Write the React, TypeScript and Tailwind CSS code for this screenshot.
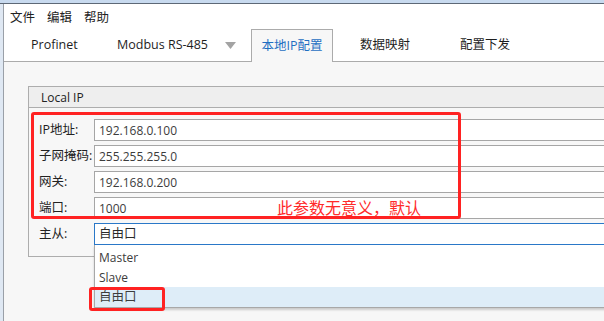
import React from "react";

const rows = [
  { label: "IP地址:", value: "192.168.0.100" },
  { label: "子网掩码:", value: "255.255.255.0" },
  { label: "网关:", value: "192.168.0.200" },
  { label: "端口:", value: "1000" },
];

export default function App() {
  return (
    <div className="w-[604px] h-[321px] overflow-hidden bg-white flex flex-col font-['Open_Sans','Noto_Sans_CJK_SC',sans-serif] text-[12px] text-[#1e1e1e]">
      <div className="h-[4px] shrink-0 bg-[#c8daef] border-b border-[#5d6876]" />
      <div className="flex-1 flex min-h-0">
        <div className="w-[3px] shrink-0 bg-[#dfe8f3]" />
        <div className="flex-1 flex flex-col border-l border-[#9aa0a8] min-w-0">
          {/* menu */}
          <div className="h-[25px] shrink-0 flex items-center pt-[3px] pl-[6px] gap-[12px] text-[12.5px] text-[#222]">
            <span>文件</span>
            <span>编辑</span>
            <span>帮助</span>
          </div>
          {/* tabs */}
          <div className="h-[33px] shrink-0 flex items-end border-b border-[#ababab] text-[12.5px] text-[#1e1e1e]">
            <div className="w-[113px] h-[32px] pl-[27px] pt-[1px] flex items-center">Profinet</div>
            <div className="w-[134px] h-[32px] pt-[1px] flex items-center justify-between pr-[15px]">
              <span>Modbus RS-485</span>
              <svg width="11" height="7" viewBox="0 0 11 7">
                <polygon points="0,0 11,0 5.5,7" fill="#a3a3a3" />
              </svg>
            </div>
            <div className="w-[82px] h-[33px] -mb-[1px] pt-[1px] relative z-10 border border-b-0 border-[#ababab] bg-[#f7f7f7] flex items-center justify-center text-[#1f6fc2]">
              本地IP配置
            </div>
            <div className="w-[127px] h-[32px] pt-[1px] pl-[27px] flex items-center">数据映射</div>
            <div className="h-[32px] pt-[1px] flex items-center">配置下发</div>
          </div>
          {/* content */}
          <div className="flex-1 relative bg-[#f7f7f7] pt-[24px] pl-[24px]">
            <div className="w-[620px] border border-[#adadad]">
              <div className="h-[21px] bg-[#eeeeee] border-b border-[#adadad] pl-[12px] pt-[1px] flex items-center text-[12px] text-[#222]">
                Local IP
              </div>
              <div className="pt-[11px] pb-[11px] pl-[10px] flex flex-col gap-[4px]">
                {rows.map((r) => (
                  <div key={r.label} className="flex items-center h-[22px]">
                    <div className="w-[55px] shrink-0 pt-[1px] text-[12.5px] text-[#222] whitespace-nowrap">{r.label}</div>
                    <div className="flex-1 h-[22px] border border-[#a6a6a6] bg-white pl-[4px] pt-[1px] flex items-center text-[12px] text-[#3c3c3c]">
                      {r.value}
                    </div>
                  </div>
                ))}
                <div className="flex items-center h-[22px]">
                  <div className="w-[55px] shrink-0 pt-[1px] text-[12.5px] text-[#222]">主从:</div>
                  <div className="flex-1 h-[22px] border border-[#2a78c8] bg-white pl-[4px] pt-[1px] flex items-center text-[12.5px] text-[#2a2a2a] relative">
                    自由口
                    <div className="absolute left-[-1px] right-[-1px] top-[21px] z-20 bg-white border-l border-r border-b border-[#a8a8a8] pt-[2px] shadow-[0_2px_2px_rgba(0,0,0,0.18)]">
                      <div className="h-[20px] pl-[4px] pt-[1px] flex items-center text-[12px] text-[#3c3c3c]">Master</div>
                      <div className="h-[20px] pl-[4px] pt-[1px] flex items-center text-[12px] text-[#3c3c3c]">Slave</div>
                      <div className="h-[20px] pl-[4px] pt-[1px] flex items-center text-[12.5px] text-[#3c3c3c] bg-[#deedf8]">自由口</div>
                    </div>
                  </div>
                </div>
              </div>
            </div>
            {/* annotations */}
            <div className="absolute left-[27px] top-[50px] w-[430px] h-[107px] border-[3px] border-[#ff2222] rounded-[3px] z-30 pointer-events-none" />
            <div className="absolute left-[273px] top-[135px] h-[20px] flex items-center text-[16px] text-[#ff2a2a] z-30 font-['Noto_Sans_CJK_SC',sans-serif]">
              此参数无意义，默认
            </div>
            <div className="absolute left-[85px] top-[225px] w-[76px] h-[24px] border-[3px] border-[#ff2222] rounded-[3px] z-30 pointer-events-none" />
          </div>
        </div>
      </div>
    </div>
  );
}
